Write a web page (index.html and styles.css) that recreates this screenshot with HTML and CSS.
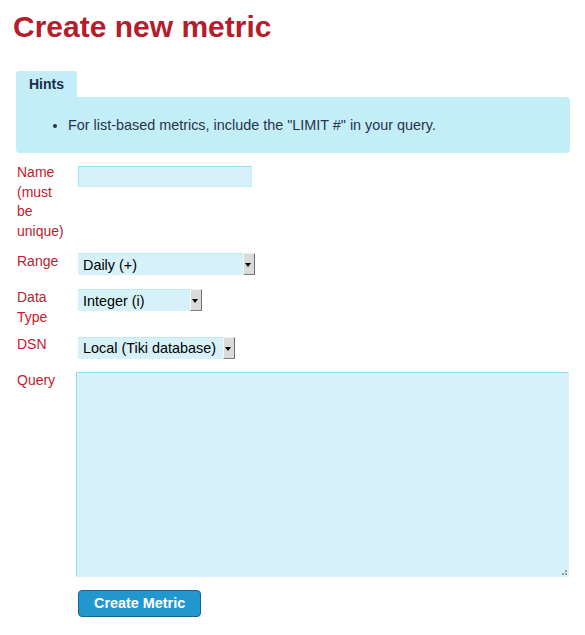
FILE: index.html
```html
<!DOCTYPE html>
<html lang="en">
<head>
<meta charset="utf-8">
<title>Create new metric</title>
<link rel="stylesheet" href="styles.css">
</head>
<body>
<div class="page">
  <h1 class="title">Create new metric</h1>

  <div class="tabs">
    <div class="tab">Hints</div>
  </div>
  <div class="hintbox">
    <ul class="hints">
      <li>For list-based metrics, include the "LIMIT #" in your query.</li>
    </ul>
  </div>

  <form class="metric-form">
    <div class="row row-name">
      <label class="label" for="m-name">Name (must be unique)</label>
      <div class="control"><input class="text-input" id="m-name" type="text"></div>
    </div>
    <div class="row">
      <label class="label" for="m-range">Range</label>
      <div class="control">
        <span class="select select-range">
          <select id="m-range"><option>Daily (+)</option></select>
        </span>
      </div>
    </div>
    <div class="row">
      <label class="label" for="m-type">Data Type</label>
      <div class="control">
        <span class="select select-type">
          <select id="m-type"><option>Integer (i)</option></select>
        </span>
      </div>
    </div>
    <div class="row row-dsn">
      <label class="label" for="m-dsn">DSN</label>
      <div class="control">
        <span class="select select-dsn">
          <select id="m-dsn"><option>Local (Tiki database)</option></select>
        </span>
      </div>
    </div>
    <div class="row row-query">
      <label class="label" for="m-query">Query</label>
      <div class="control control-query">
        <textarea class="query" id="m-query"></textarea>
        <span class="grip"></span>
      </div>
    </div>
    <div class="actions">
      <button class="btn" type="button">Create Metric</button>
    </div>
  </form>
</div>
</body>
</html>
```
FILE: styles.css
```css
html, body {
  margin: 0;
  padding: 0;
  background: #ffffff;
}

body {
  font-family: "Liberation Sans", Arial, sans-serif;
  font-size: 14px;
  line-height: 1.4;
  color: #1f2d4a;
}

.page {
  padding: 12px 15px 0 16px;
}

.title {
  margin: 0 0 29px -3px;
  font-size: 30px;
  line-height: 30px;
  font-weight: bold;
  color: #b71c2c;
}

.tabs {
  display: flex;
}

.tab {
  padding: 1px 13px 0 13px;
  line-height: 25px;
  font-weight: bold;
  color: #1c2c4c;
  background: #c4eef7;
  border-radius: 3px 3px 0 0;
}

.hintbox {
  background: #c4eef7;
  border-radius: 0 4px 4px 4px;
  padding: 18px 12px 18px 12px;
}

.hints {
  margin: 0;
  padding-left: 40px;
  color: #27344f;
  font-size: 14.4px;
  line-height: 20px;
}

.metric-form {
  margin-top: 10px;
  padding-left: 1px;
}

.row {
  display: grid;
  grid-template-columns: 59px 1fr;
  align-items: start;
  margin-bottom: 7px;
}

.row-name {
  margin-bottom: 11px;
}

.label {
  display: block;
  width: 52px;
  color: #c4202e;
  line-height: 19.6px;
}

.control {
  display: flex;
  align-items: flex-start;
}

.text-input {
  box-sizing: border-box;
  width: 174px;
  height: 21px;
  margin: 3px 0 0 2px;
  padding: 0 4px;
  border: 1px solid #c8eef7;
  border-top-color: #8ee2f4;
  border-left-color: #a6e8f6;
  background: #d6f2f8;
  font: 14px "Liberation Sans", Arial, sans-serif;
  outline: none;
}

.select {
  position: relative;
  display: block;
  margin: 1px 0 6px 2px;
  height: 22px;
}

.row-dsn .select {
  margin-top: 2px;
  margin-bottom: 5px;
}

.select-range { width: 177px; }
.select-type { width: 124px; }
.select-dsn { width: 157px; }

.select select {
  -webkit-appearance: none;
  appearance: none;
  box-sizing: border-box;
  width: 100%;
  height: 22px;
  margin: 0;
  padding: 1px 14px 0 4px;
  border: 1px solid #d6f2f8;
  border-top-color: #bfeaf5;
  background: #d6f2f8;
  color: #000;
  font: 14.4px "Liberation Sans", Arial, sans-serif;
  outline: none;
}

.select::after {
  content: "";
  position: absolute;
  top: 0;
  right: 0;
  width: 10px;
  height: 20px;
  background: #dadada;
  border-top: 1px solid #efefef;
  border-left: 1px solid #f8f8f8;
  border-right: 1px solid #6f6f6f;
  border-bottom: 1px solid #7f7f7f;
  pointer-events: none;
}

.select::before {
  content: "";
  position: absolute;
  z-index: 1;
  top: 10px;
  right: 4px;
  width: 0;
  height: 0;
  border-left: 3px solid transparent;
  border-right: 3px solid transparent;
  border-top: 4px solid #000;
  pointer-events: none;
}

.control-query {
  position: relative;
}

.query {
  box-sizing: border-box;
  display: block;
  width: 493px;
  height: 205px;
  margin: 1px 0 0 0;
  padding: 2px 4px;
  border: 1px solid #d6f2f8;
  border-top-color: #8ee2f4;
  border-left-color: #8ee2f4;
  background: #d6f2f8;
  font: 14px "Liberation Sans", Arial, sans-serif;
  outline: none;
  resize: none;
}

.grip {
  position: absolute;
  right: 3px;
  bottom: 2px;
  width: 2px;
  height: 2px;
  background: #9a9a9a;
  box-shadow: -3px 0 0 #9a9a9a, 0 -3px 0 #9a9a9a;
  pointer-events: none;
}

.row-query {
  margin-bottom: 13px;
}

.actions {
  padding-left: 61px;
}

.btn {
  margin: 0;
  padding: 0 15px;
  height: 27px;
  line-height: 25px;
  border: 1px solid #17628f;
  border-radius: 4px;
  background: #2297cf;
  color: #ffffff;
  font: bold 14.4px "Liberation Sans", Arial, sans-serif;
  cursor: pointer;
}
```
